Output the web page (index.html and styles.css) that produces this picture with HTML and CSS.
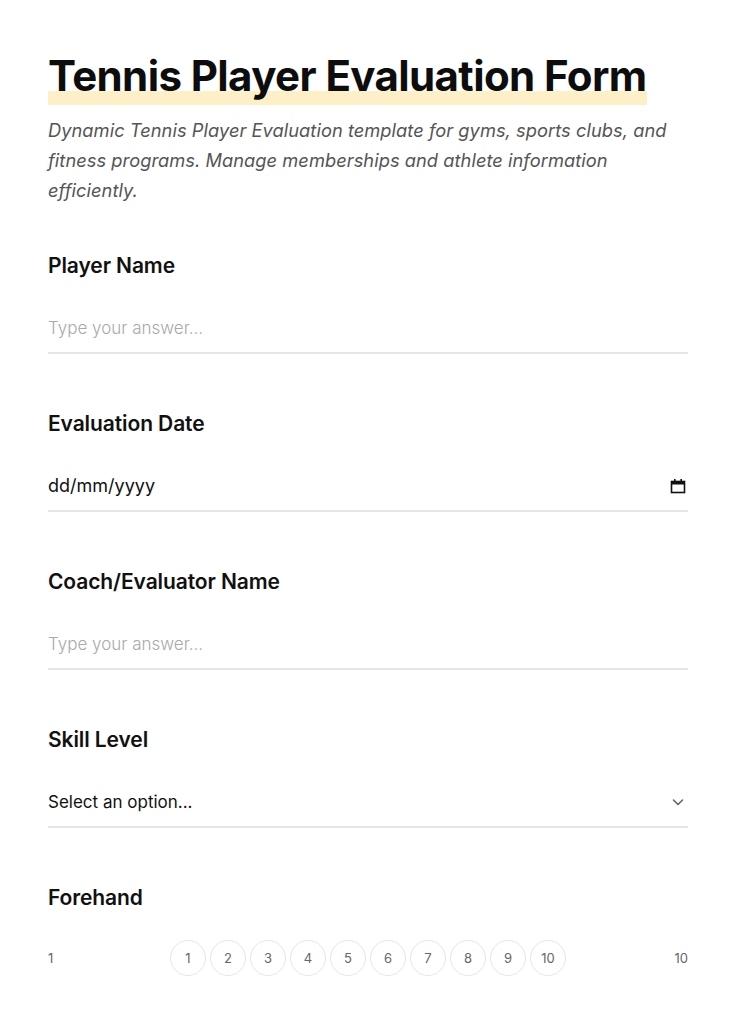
FILE: index.html
```html
<!DOCTYPE html>
<html lang="en">
<head>
<meta charset="utf-8">
<title>Tennis Player Evaluation Form</title>
<link rel="stylesheet" href="styles.css">
</head>
<body>
<main class="page">
  <header class="intro">
    <h1 class="title"><span class="title-mark">Tennis Player Evaluation Form</span></h1>
    <p class="lead">Dynamic Tennis Player Evaluation template for gyms, sports clubs, and fitness programs. Manage memberships and athlete information efficiently.</p>
  </header>
  <form class="form">
    <div class="field">
      <label class="label" for="player">Player Name</label>
      <input class="input" id="player" type="text" placeholder="Type your answer...">
    </div>
    <div class="field">
      <label class="label">Evaluation Date</label>
      <div class="control">
        <span class="control-text date-text">dd/mm/yyyy</span>
        <svg class="cal-icon" width="16" height="16" viewBox="0 0 16 16" aria-hidden="true">
          <rect x="1.5" y="3.5" width="13" height="11" fill="none" stroke="#111" stroke-width="1.6"/>
          <rect x="1.5" y="3.5" width="13" height="3" fill="#111"/>
          <rect x="4" y="1" width="1.6" height="4" fill="#111"/>
          <rect x="10.4" y="1" width="1.6" height="4" fill="#111"/>
        </svg>
      </div>
    </div>
    <div class="field">
      <label class="label" for="coach">Coach/Evaluator Name</label>
      <input class="input" id="coach" type="text" placeholder="Type your answer...">
    </div>
    <div class="field">
      <label class="label">Skill Level</label>
      <div class="control">
        <span class="control-text">Select an option...</span>
        <svg class="chev-icon" width="14" height="14" viewBox="0 0 14 14" aria-hidden="true">
          <path d="M2.5 5 L7 9.5 L11.5 5" fill="none" stroke="#666" stroke-width="1.6" stroke-linecap="round" stroke-linejoin="round"/>
        </svg>
      </div>
    </div>
    <div class="field field-last">
      <label class="label">Forehand</label>
      <div class="rating">
        <span class="rating-end">1</span>
        <div class="rating-scale">
          <span class="dot">1</span><span class="dot">2</span><span class="dot">3</span><span class="dot">4</span><span class="dot">5</span><span class="dot">6</span><span class="dot">7</span><span class="dot">8</span><span class="dot">9</span><span class="dot">10</span>
        </div>
        <span class="rating-end">10</span>
      </div>
    </div>
  </form>
</main>
</body>
</html>
```

FILE: styles.css
```css
* { box-sizing: border-box; }
html, body { margin: 0; padding: 0; background: #fff; }
body {
  font-family: "Inter", "Liberation Sans", sans-serif;
  color: #111;
}
.page {
  padding: 48px 48px 0;
}
.intro { margin: 0; }
.title {
  margin: 0;
  font-size: 42px;
  line-height: 56px;
  font-weight: 700;
  letter-spacing: -0.6px;
  color: #0d0d0d;
}
.title-mark {
  padding-bottom: 4px;
  background: linear-gradient(to bottom, transparent 0, transparent 75%, #fdf0c6 75%, #fdf0c6 100%);
}
.lead {
  margin: 11px 0 0;
  font-size: 18.25px;
  line-height: 30px;
  font-style: italic;
  font-weight: 400;
  letter-spacing: 0.05px;
  color: #555;
}
.form {
  margin-top: 47px;
  display: flex;
  flex-direction: column;
  gap: 56px;
}
.field {
  display: flex;
  flex-direction: column;
  gap: 24px;
}
.label {
  font-size: 21px;
  line-height: 28px;
  font-weight: 600;
  color: #111;
  letter-spacing: -0.1px;
}
.input {
  display: block;
  width: 100%;
  border: 0;
  border-bottom: 2px solid #e6e6e6;
  padding: 12px 0;
  font-family: inherit;
  font-size: 17px;
  line-height: 24px;
  font-weight: 300;
  color: #111;
  background: transparent;
  outline: none;
}
.input::placeholder { color: #a9a9a9; }
.control {
  display: flex;
  align-items: center;
  justify-content: space-between;
  padding: 12px 0;
  border-bottom: 2px solid #e6e6e6;
}
.control-text {
  font-size: 17px;
  line-height: 24px;
  color: #111;
}
.date-text { font-size: 18px; }
.cal-icon { margin-right: 2px; }
.chev-icon { margin-right: 3px; }
.rating {
  display: flex;
  align-items: center;
  justify-content: space-between;
  margin-top: 4px;
}
.rating-end {
  font-size: 13px;
  color: #666;
  width: 40px;
}
.rating-end:last-child { text-align: right; }
.rating-scale {
  display: flex;
  gap: 4px;
}
.dot {
  width: 36px;
  height: 36px;
  border-radius: 50%;
  border: 1px solid #e6e6e6;
  display: flex;
  align-items: center;
  justify-content: center;
  font-size: 13px;
  color: #666;
}
```
